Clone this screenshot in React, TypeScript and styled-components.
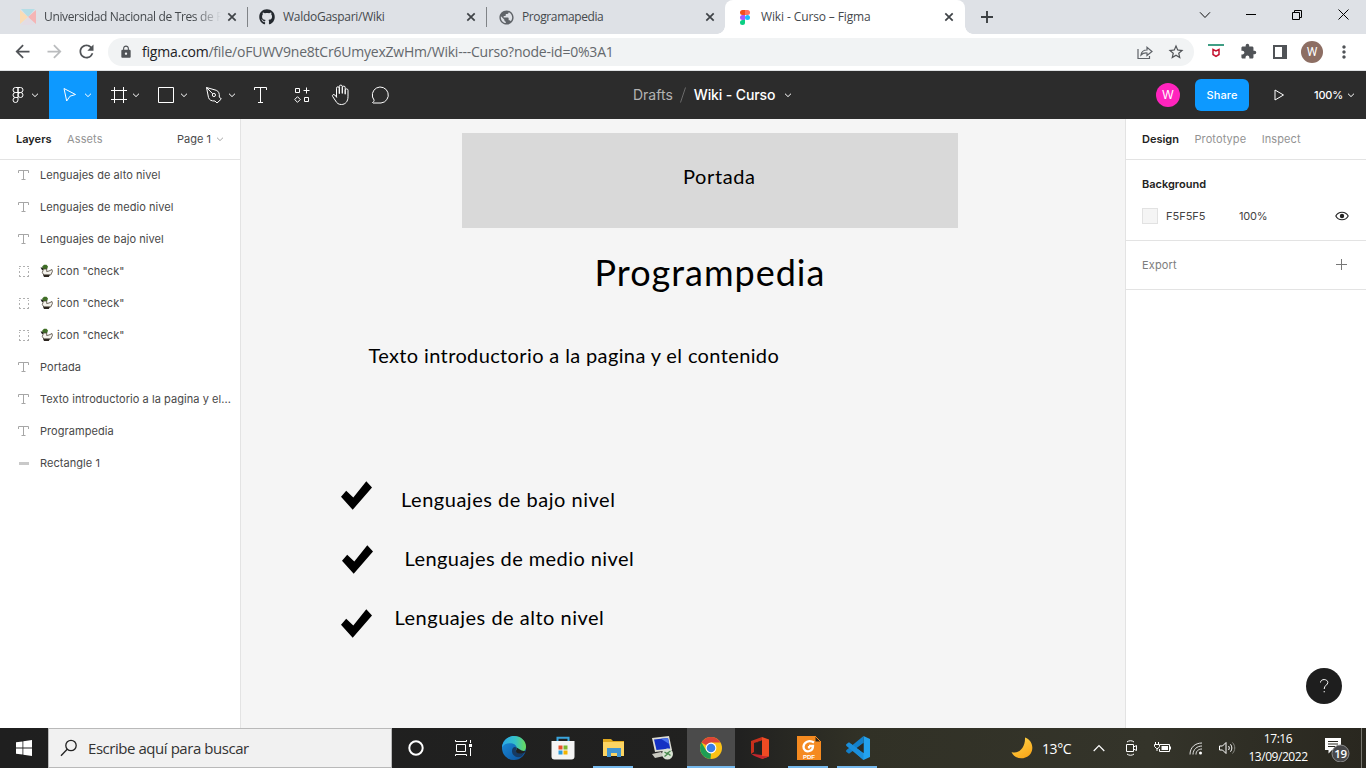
import React from "react";
import styled, { createGlobalStyle, css } from "styled-components";
import { MdArrowBack, MdArrowForward, MdRefresh, MdLock, MdStarBorder, MdExtension, MdPublic, MdMoreVert } from "react-icons/md";
import { FaGithub } from "react-icons/fa";

const Global = createGlobalStyle`
  * { box-sizing: border-box; }
  body { margin: 0; overflow: hidden; background: #fff; }
  svg { display: block; flex: none; }
`;

const Screen = styled.div`
  display: flex;
  flex-direction: column;
  width: 1366px;
  height: 768px;
  overflow: hidden;
  font-family: Inter, sans-serif;
`;

/* ---------- browser ---------- */

const TabStrip = styled.div`
  display: flex;
  height: 34px;
  padding-left: 8px;
  background: #dee1e6;
  font-family: "Open Sans", sans-serif;
`;

const Tab = styled.div<{ $active?: boolean; $divider?: boolean }>`
  position: relative;
  display: flex;
  align-items: center;
  width: 239px;
  height: 34px;
  padding: 0 10px 0 12px;
  ${(p) => p.$divider && css`
    &::after {
      content: "";
      position: absolute;
      right: -1px;
      top: 7px;
      width: 1px;
      height: 20px;
      background: #808387;
    }
  `}
  ${(p) => p.$active && css`
    width: 240px;
    padding-right: 11px;
    background: #fff;
    border-radius: 8px 8px 0 0;
    &::before, &::after {
      content: "";
      position: absolute;
      bottom: 0;
      width: 8px;
      height: 8px;
    }
    &::before { left: -8px; background: radial-gradient(circle at 0 0, transparent 7.5px, #fff 8px); }
    &::after { right: -8px; background: radial-gradient(circle at 100% 0, transparent 7.5px, #fff 8px); }
  `}
`;

const Favicon = styled.span`
  display: flex;
  justify-content: center;
  width: 16px;
  margin-right: 8px;
`;

const TabTitle = styled.span<{ $ls: number; $fade?: boolean }>`
  flex: 1;
  white-space: nowrap;
  font-size: 12px;
  line-height: 18px;
  letter-spacing: ${(p) => p.$ls}px;
  color: #45494d;
  ${(p) => p.$fade && css`
    mask-image: linear-gradient(90deg, #000 150px, transparent 177px);
  `}
`;

const NewTab = styled.div`
  display: flex;
  align-items: center;
  margin-left: 15px;
`;

const WindowButtons = styled.div`
  display: flex;
  height: 29px;
  margin-left: auto;
`;

const WindowButton = styled.div`
  display: flex;
  align-items: center;
  justify-content: center;
  width: 46px;
`;

const AddressBar = styled.div`
  display: flex;
  align-items: center;
  height: 37px;
  padding-bottom: 1px;
  border-bottom: 1px solid #dfe1e3;
  background: #fff;
`;

const NavButton = styled.div<{ $dim?: boolean }>`
  display: flex;
  align-items: center;
  justify-content: center;
  width: 32px;
  color: ${(p) => (p.$dim ? "#babcbe" : "#505357")};
`;

const NavGroup = styled.div`
  display: flex;
  padding-left: 6px;
  width: 108px;
`;

const UrlPill = styled.div`
  display: flex;
  align-items: center;
  width: 1086px;
  height: 28px;
  padding: 0 9px 0 11px;
  border-radius: 14px;
  background: #f1f3f4;
  color: #505357;
`;

const Url = styled.div`
  flex: 1;
  margin-left: 9px;
  font-family: "Open Sans", sans-serif;
  font-size: 14px;
  line-height: 20px;
  letter-spacing: -0.22px;
  color: #64686c;
  b { font-weight: 400; color: #202124; }
`;

const PillIcons = styled.div`
  display: flex;
  align-items: center;
  gap: 14px;
`;

const Extensions = styled.div`
  display: flex;
  margin-left: 6px;
`;

const ProfileDot = styled.div`
  display: flex;
  align-items: center;
  justify-content: center;
  width: 22px;
  height: 22px;
  border-radius: 50%;
  background: #8d6e63;
  color: #fff;
  font: 12px Roboto, sans-serif;
`;

/* ---------- editor toolbar ---------- */

const Toolbar = styled.div`
  display: flex;
  height: 48px;
  background: #2c2c2c;
  color: #fff;
`;

const ToolGroup = styled.div`
  display: flex;
  width: 633px;
  padding-left: 1px;
`;

const Tool = styled.div<{ $active?: boolean; $single?: boolean; $menu?: boolean }>`
  display: flex;
  align-items: center;
  justify-content: ${(p) => (p.$single ? "center" : "space-between")};
  width: ${(p) => (p.$single ? 40 : 48)}px;
  padding: ${(p) => (p.$single ? "0 1px 0 0" : p.$menu ? "0 10px 0 8px" : "0 5px 0 8px")};
  background: ${(p) => (p.$active ? "#0d99ff" : "transparent")};
`;

const Breadcrumb = styled.div`
  display: flex;
  align-items: center;
  width: 523px;
  font-size: 14px;
  line-height: 18px;
  color: #b3b3b3;
`;

const FileName = styled.span`
  margin-right: 9px;
  font-weight: 500;
  letter-spacing: -0.12px;
  color: #fff;
`;

const Slash = styled.span`
  width: 21px;
  display: flex;
  justify-content: center;
`;

const Actions = styled.div`
  display: flex;
  align-items: center;
`;

const UserDot = styled.div`
  width: 24px;
  height: 24px;
  border-radius: 50%;
  background: #ff24bd;
  font-size: 12px;
  line-height: 24px;
  text-align: center;
`;

const ShareButton = styled.div`
  width: 54px;
  height: 32px;
  margin-left: 15px;
  border-radius: 6px;
  background: #0d99ff;
  font-size: 11px;
  font-weight: 500;
  line-height: 32px;
  text-align: center;
  letter-spacing: 0.1px;
`;

const PlayIcon = styled.div`
  margin: 0 29px 0 24px;
`;

const Zoom = styled.div`
  width: 33px;
  font-size: 11px;
  font-weight: 500;
  letter-spacing: -0.15px;
`;

/* ---------- workspace ---------- */

const Workspace = styled.div`
  display: flex;
  height: 609px;
`;

const LeftPanel = styled.div`
  width: 241px;
  border-right: 1px solid #e3e3e3;
  background: #fff;
`;

const RightPanel = styled.div`
  position: relative;
  width: 241px;
  border-left: 1px solid #e3e3e3;
  background: #fff;
`;

const PanelHeader = styled.div`
  display: flex;
  align-items: center;
  gap: 15.5px;
  height: 41px;
  padding: 0 16px;
  border-bottom: 1px solid #e3e3e3;
  font-size: 11px;
`;

const PanelTab = styled.span<{ $active?: boolean }>`
  font-weight: ${(p) => (p.$active ? 600 : 400)};
  color: ${(p) => (p.$active ? "#222" : "#939393")};
  letter-spacing: ${(p) => (p.$active ? 0 : 0.1)}px;
`;

const PageName = styled.span`
  display: flex;
  align-items: center;
  gap: 5px;
  margin-left: auto;
  color: #4a4a4a;
`;

const LayerRow = styled.div`
  display: flex;
  align-items: center;
  height: 32px;
  padding: 0 0 2px 16px;
  font-size: 11px;
  color: #484848;
`;

const LayerIcon = styled.span`
  flex: none;
  width: 24px;
`;

const LayerName = styled.span`
  display: flex;
  align-items: center;
  gap: 4px;
  white-space: nowrap;
  letter-spacing: 0.06px;
`;

const Section = styled.div<{ $h: number }>`
  display: flex;
  flex-direction: column;
  justify-content: center;
  height: ${(p) => p.$h}px;
  padding: 0 16px;
  border-bottom: 1px solid #e3e3e3;
  font-size: 11px;
  color: #444;
`;

const SectionRow = styled.div`
  display: flex;
  align-items: center;
  height: 32px;
`;

const SectionTitle = styled.span<{ $muted?: boolean }>`
  flex: 1;
  font-weight: ${(p) => (p.$muted ? 400 : 600)};
  color: ${(p) => (p.$muted ? "#7d7d7d" : "#222")};
  letter-spacing: ${(p) => (p.$muted ? 0.15 : 0)}px;
`;

const Swatch = styled.span`
  width: 16px;
  height: 16px;
  margin-right: 8px;
  border: 1px solid #e2e2e2;
  background: #f5f5f5;
`;

const Hex = styled.span`
  width: 73px;
`;

const Opacity = styled.span`
  flex: 1;
  letter-spacing: -0.2px;
`;

const HelpButton = styled.div`
  position: absolute;
  right: 24px;
  bottom: 24px;
  display: flex;
  align-items: center;
  justify-content: center;
  width: 36px;
  height: 36px;
  border-radius: 50%;
  background: #1e1e1e;
`;

const Canvas = styled.div`
  position: relative;
  width: 884px;
  overflow: hidden;
  background: #f5f5f5;
`;

const Cover = styled.div`
  position: absolute;
  left: 221px;
  top: 14px;
  width: 496px;
  height: 95px;
  background: #d9d9d9;
`;

const CanvasText = styled.div<{ $x: number; $y: number; $ls: number; $size?: number }>`
  position: absolute;
  left: ${(p) => p.$x}px;
  top: ${(p) => p.$y}px;
  white-space: nowrap;
  font-family: Lato, sans-serif;
  font-size: ${(p) => p.$size ?? 20}px;
  line-height: 1.2;
  letter-spacing: ${(p) => p.$ls}px;
  color: #000;
`;

const CheckMark = styled.svg<{ $x: number; $y: number }>`
  position: absolute;
  left: ${(p) => p.$x}px;
  top: ${(p) => p.$y}px;
`;

/* ---------- taskbar ---------- */

const Taskbar = styled.div`
  display: flex;
  height: 40px;
  background: linear-gradient(90deg, #1f1f1f 0, #212120 740px, #313126 860px, #34342a 1150px, #29271f 1366px);
  font-family: "Open Sans", sans-serif;
  color: #fff;
`;

const StartButton = styled.div`
  display: flex;
  align-items: center;
  justify-content: center;
  width: 48px;
`;

const SearchBox = styled.div`
  display: flex;
  align-items: center;
  width: 344px;
  padding-left: 11px;
  border: 1px solid #b9b9b9;
  background: #f1f1f1;
  font-size: 15px;
  letter-spacing: -0.45px;
  color: #333;
  svg { margin-right: 10px; }
`;

const TaskButton = styled.div<{ $active?: boolean; $open?: boolean; $w?: number; $trim?: number }>`
  display: flex;
  align-items: center;
  justify-content: center;
  width: ${(p) => p.$w ?? 49}px;
  padding-right: ${(p) => p.$trim ?? 0}px;
  position: relative;
  background: ${(p) => (p.$active ? "#4b4b4b" : "transparent")};
  ${(p) => p.$open && css`
    &::after {
      content: "";
      position: absolute;
      bottom: 0;
      left: ${p.$active ? 0 : 4}px;
      right: ${p.$active ? 0 : 5}px;
      height: 2px;
      background: #76b9ed;
    }
  `}
`;

const Tray = styled.div`
  display: flex;
  align-items: center;
  margin-left: auto;
`;

const TrayCell = styled.div<{ $w: number }>`
  display: flex;
  justify-content: center;
  width: ${(p) => p.$w}px;
`;

const Weather = styled.div`
  width: 40px;
  margin-left: 9px;
  font-size: 14px;
  letter-spacing: -0.4px;
`;

const Clock = styled.div`
  width: 73px;
  padding-left: 1px;
  font-size: 12px;
  line-height: 18px;
  text-align: center;
  letter-spacing: -0.45px;
`;

const DesktopEdge = styled.div`
  height: 40px;
  border-left: 1px solid #77766f;
  width: 5px;
`;

/* ---------- icons ---------- */

const Chevron = ({ color = "#fff" }: { color?: string }) => (
  <svg width="8" height="8" viewBox="0 0 8 8" fill="none" stroke={color}>
    <path d="M1 2.7 4 5.6 7 2.7" />
  </svg>
);

const CloseX = () => (
  <svg width="10" height="10" viewBox="0 0 10 10" stroke="#3f4347" strokeWidth="1.7">
    <path d="M1.3 1.3 8.7 8.7M8.7 1.3 1.3 8.7" />
  </svg>
);

const FigmaColor = () => (
  <svg width="10" height="15" viewBox="0 0 10 15">
    <path d="M2.5 0H5v5H2.5a2.5 2.5 0 0 1 0-5z" fill="#f24e1e" />
    <path d="M5 0h2.5a2.5 2.5 0 0 1 0 5H5z" fill="#ff7262" />
    <path d="M2.5 5H5v5H2.5a2.5 2.5 0 0 1 0-5z" fill="#a259ff" />
    <circle cx="7.5" cy="7.5" r="2.5" fill="#1abcfe" />
    <path d="M2.5 10H5v2.5A2.5 2.5 0 1 1 2.5 10z" fill="#0acf83" />
  </svg>
);

const UniIcon = () => (
  <svg width="16" height="16" viewBox="0 0 16 16">
    <path d="M1 0h14L8 8z" fill="#b4dde6" />
    <path d="M0 1v14l8-7z" fill="#fbdcb4" />
    <path d="M16 1v14L8 8z" fill="#f5b5b5" />
    <path d="M1 16h14L8 8z" fill="#e3dce4" />
  </svg>
);

const TextLayerIcon = () => (
  <svg width="14" height="14" viewBox="0 0 14 14" fill="none" stroke="#a6a6a6">
    <path d="M2.5 5V2.5h10V5M7.5 2.5v9M5.5 11.5h4" />
  </svg>
);

const GroupLayerIcon = () => (
  <svg width="14" height="14" viewBox="0 0 14 14" fill="none" stroke="#b0b0b0">
    <path d="M3 2.5h2M7 2.5h2M11 2.5h2M3 12.5h2M7 12.5h2M11 12.5h2M3.5 4v1M3.5 7v2M3.5 11v1M12.5 4v1M12.5 7v2M12.5 11v1" />
  </svg>
);

const RectLayerIcon = () => (
  <svg width="14" height="14" viewBox="0 0 14 14">
    <path d="M3 6h10v3H3z" fill="#c9c9c9" />
  </svg>
);

const Duck = () => (
  <svg width="13" height="14" viewBox="0 0 13 14">
    <path d="M.5 3.5H3V6H2z" fill="#222" />
    <path d="M2.2 2.5 4 .8h2.5L8 2.5 7.2 5H3z" fill="#3f6e26" />
    <path d="M3.5 5h3.200v2.500L9 7l3-1.500.4 2-1.700 3.500H3.800L2.300 8.500z" fill="#f4f2ec" stroke="#4a4136" strokeWidth=".8" />
    <path d="M3 10.800h7l-1.200 2.200H4z" fill="#2c2620" />
  </svg>
);

const layers: { kind: "text" | "group" | "rect"; name: string }[] = [
  { kind: "text", name: "Lenguajes de alto nivel" },
  { kind: "text", name: "Lenguajes de medio nivel" },
  { kind: "text", name: "Lenguajes de bajo nivel" },
  { kind: "group", name: 'icon "check"' },
  { kind: "group", name: 'icon "check"' },
  { kind: "group", name: 'icon "check"' },
  { kind: "text", name: "Portada" },
  { kind: "text", name: "Texto introductorio a la pagina y el..." },
  { kind: "text", name: "Programpedia" },
  { kind: "rect", name: "Rectangle 1" },
];

const Check = ({ x, y }: { x: number; y: number }) => (
  <CheckMark $x={x} $y={y} width="32" height="30" viewBox="0 0 32 30">
    <path d="M0 15.700 5.200 9.800l7.100 6.700L25.300.2l5.700 6.200L11.700 28.700z" />
  </CheckMark>
);

const Browser = () => (
  <>
    <TabStrip>
      <Tab $divider>
        <Favicon><UniIcon /></Favicon>
        <TabTitle $ls={-0.35} $fade>Universidad Nacional de Tres de F</TabTitle>
        <CloseX />
      </Tab>
      <Tab $divider>
        <Favicon><FaGithub size={16} color="#24292f" /></Favicon>
        <TabTitle $ls={-0.28}>WaldoGaspari/Wiki</TabTitle>
        <CloseX />
      </Tab>
      <Tab>
        <Favicon><MdPublic size={17} color="#5f6368" /></Favicon>
        <TabTitle $ls={-0.38}>Programapedia</TabTitle>
        <CloseX />
      </Tab>
      <Tab $active>
        <Favicon><FigmaColor /></Favicon>
        <TabTitle $ls={-0.12}>Wiki - Curso – Figma</TabTitle>
        <CloseX />
      </Tab>
      <NewTab>
        <svg width="14" height="14" viewBox="0 0 14 14" stroke="#3c4043" strokeWidth="1.9">
          <path d="M7 1v12M1 7h12" />
        </svg>
      </NewTab>
      <WindowButtons>
        <WindowButton>
          <svg width="12" height="8" viewBox="0 0 12 8" fill="none" stroke="#111"><path d="M1 1.3 6 6.5 11 1.3" /></svg>
        </WindowButton>
        <WindowButton>
          <svg width="10" height="1" viewBox="0 0 10 1"><path d="M0 0h10v1H0z" /></svg>
        </WindowButton>
        <WindowButton>
          <svg width="10" height="10" viewBox="0 0 10 10" fill="none" stroke="#000">
            <path d="M.5 2.5h7v7h-7zM2.5 2.5v-2h7v7h-2" />
          </svg>
        </WindowButton>
        <WindowButton>
          <svg width="11" height="11" viewBox="0 0 11 11" stroke="#000"><path d="M.5.5l10 10M10.5.5l-10 10" /></svg>
        </WindowButton>
      </WindowButtons>
    </TabStrip>
    <AddressBar>
      <NavGroup>
        <NavButton><MdArrowBack size={21} /></NavButton>
        <NavButton $dim><MdArrowForward size={21} /></NavButton>
        <NavButton><MdRefresh size={21} /></NavButton>
      </NavGroup>
      <UrlPill>
        <MdLock size={14} />
        <Url><b>figma.com</b>/file/oFUWV9ne8tCr6UmyexZwHm/Wiki---Curso?node-id=0%3A1</Url>
        <PillIcons>
          <svg width="16" height="16" viewBox="0 0 16 16" fill="none" stroke="#5f6368" strokeWidth="1.2">
            <path d="M1 5v9.5h11.500V12" />
            <path d="M4 11c.5-3.500 2.500-5 6-5V3.200L15 7.500l-5 4V9c-2.500-.2-4.500.4-6 2z" />
          </svg>
          <MdStarBorder size={18} />
        </PillIcons>
      </UrlPill>
      <Extensions>
        <NavButton>
          <svg width="16" height="16" viewBox="0 0 16 16" fill="none">
            <path d="M0 1h16" stroke="#3f9e84" strokeWidth="2" />
            <path d="M5 5.500l3 1.500 3-1.500v5L8 12.300 5 10.500z" stroke="#c4122f" strokeWidth="1.5" />
          </svg>
        </NavButton>
        <NavButton><MdExtension size={17} /></NavButton>
        <NavButton>
          <svg width="14" height="14" viewBox="0 0 14 14">
            <path d="M0 0h14v14H0zM2 2v10h7V2z" fill="#505357" fillRule="evenodd" />
          </svg>
        </NavButton>
        <NavButton><ProfileDot>W</ProfileDot></NavButton>
        <NavButton><MdMoreVert size={20} /></NavButton>
      </Extensions>
    </AddressBar>
  </>
);

const EditorToolbar = () => (
  <Toolbar>
    <ToolGroup>
      <Tool $menu>
        <svg width="18" height="18" viewBox="0 0 18 18" fill="none" stroke="#fff">
          <path d="M9 1.500H6.500a2.500 2.500 0 0 0 0 5H9zM9 1.500h2.500a2.500 2.500 0 0 1 0 5H9zM9 6.500H6.500a2.500 2.500 0 0 0 0 5H9zM6.500 11.500H9V14a2.500 2.500 0 1 1-2.500-2.500z" />
          <circle cx="11.500" cy="9" r="2.500" />
        </svg>
        <Chevron />
      </Tool>
      <Tool $active>
        <svg width="24" height="18" viewBox="0 0 24 18" fill="none" stroke="#fff" strokeLinejoin="round">
          <path d="M7 2.500 18.500 8.500 13 10.200 9.700 15z" />
        </svg>
        <Chevron />
      </Tool>
      <Tool>
        <svg width="26" height="18" viewBox="0 0 26 18" fill="none" stroke="#fff">
          <path d="M9.500 1v16M18.500 1v16M6 4.500h16M6 13.500h16" />
        </svg>
        <Chevron />
      </Tool>
      <Tool>
        <svg width="26" height="18" viewBox="0 0 26 18" fill="none" stroke="#fff">
          <path d="M5.500 1.500h15v15h-15z" />
        </svg>
        <Chevron />
      </Tool>
      <Tool>
        <svg width="24" height="18" viewBox="0 0 24 18" fill="none" stroke="#fff" strokeLinejoin="round">
          <path d="M5.500 1.500 15.300 4.300C17.600 5.200 18.700 7.500 18.300 11l2 2-4.300 4-2-2C10.300 15.200 8.300 14 7.500 11.500z" />
          <path d="M5.500 1.500l6.200 6.300" />
          <circle cx="12.900" cy="9" r="1.600" />
        </svg>
        <Chevron />
      </Tool>
      <Tool $single>
        <svg width="15" height="18" viewBox="0 0 15 18" fill="none" stroke="#fff">
          <path d="M1.500 4V1.500h12V4M7.500 1.500v15M5 16.500h5" />
        </svg>
      </Tool>
      <Tool $single>
        <svg width="19" height="18" viewBox="-2 0 19 18" fill="none" stroke="#fff">
          <path d="M2.500 2.500h4v4h-4zM11.500 11.500h4v4h-4zM13.500 1.500v6M10.500 4.500h6M4.500 10.700 7.300 13.500 4.500 16.300 1.700 13.500z" />
        </svg>
      </Tool>
      <Tool $single>
        <svg width="20" height="22" viewBox="0 0 20 22" fill="none" stroke="#fff" strokeLinejoin="round" strokeLinecap="round">
          <path d="M5.500 13V4.200a1.400 1.400 0 0 1 2.800 0V9.500M8.300 9V2.600a1.500 1.500 0 0 1 3 0V9M11.300 9V3.600a1.400 1.400 0 0 1 2.900 0V10M14.200 9.500V6.300a1.400 1.400 0 0 1 2.800 0v6.500c0 4.500-2.500 7.700-6.600 7.700-3 0-4.400-1.300-5.700-3.500L1.600 12.400c-.8-1.500 1.100-2.600 2.200-1.400L5.500 13" />
        </svg>
      </Tool>
      <Tool $single>
        <svg width="20" height="20" viewBox="0 0 20 20" fill="none" stroke="#fff" strokeLinejoin="round">
          <path d="M1.500 17.500c1-.5 1.600-1.400 1.600-2.400A8 8 0 1 1 10 18H2z" />
        </svg>
      </Tool>
    </ToolGroup>
    <Breadcrumb>
      Drafts
      <Slash>
        <svg width="6" height="16" viewBox="0 0 6 16" stroke="#6b6b6b"><path d="M.5 15.500 5.500.5" /></svg>
      </Slash>
      <FileName>Wiki - Curso</FileName>
      <Chevron />
    </Breadcrumb>
    <Actions>
      <UserDot>W</UserDot>
      <ShareButton>Share</ShareButton>
      <PlayIcon>
        <svg width="12" height="12" viewBox="0 0 12 12" fill="none" stroke="#fff" strokeLinejoin="round"><path d="M2 1v10l8.500-5z" /></svg>
      </PlayIcon>
      <Zoom>100%</Zoom>
      <Chevron />
    </Actions>
  </Toolbar>
);

const TaskIcons = () => (
  <>
    <TaskButton $trim={2}>
      <svg width="18" height="18" viewBox="0 0 18 18" fill="none" stroke="#fff" strokeWidth="2"><circle cx="9" cy="9" r="6.700" /></svg>
    </TaskButton>
    <TaskButton $w={50} $trim={6}>
      <svg width="18" height="18" viewBox="0 0 18 18" fill="none" stroke="#fff">
        <path d="M2.500 5.500h9v7h-9zM1.500 1v1.500h11V1M1.500 17v-1.500h11V17M16.500 1v3M16.500 9v8" />
        <path d="M15 5h3v3h-3z" fill="#fff" stroke="none" />
      </svg>
    </TaskButton>
    <TaskButton $trim={3}>
      <svg width="26" height="26" viewBox="0 0 26 26">
        <defs>
          <linearGradient id="edgeTop" x1="0" x2="1"><stop offset="0" stopColor="#2aa7e8" /><stop offset=".55" stopColor="#35c1c8" /><stop offset="1" stopColor="#6bdc58" /></linearGradient>
          <linearGradient id="edgeBody" x1="0" x2="1" y2="1"><stop offset="0" stopColor="#1b8fdc" /><stop offset="1" stopColor="#0c4f9c" /></linearGradient>
        </defs>
        <circle cx="13" cy="13" r="12" fill="url(#edgeBody)" />
        <path d="M1 12.500C1.500 5.500 7 1 13 1c7 0 12 5 12 10.500 0 4-3 6-6.500 6-2.500 0-4-1-3.500-2 1.500-2 .8-6-3.500-7C7 7.500 2.500 9 1 12.500z" fill="url(#edgeTop)" />
        <path d="M14.800 15.500c-.5 1.200 1.200 2 3.700 2 2.400 0 4.500-.7 5.500-1.800-.6 2.300-2 4.500-4 6-5 1.600-9-1.500-9-5.700 0-2.500 1.500-4 3-4 1.800.4 1.500 2.600.8 3.500z" fill="#173a63" />
        <path d="M15 15.500c1-1.500.8-3-.3-3.600l6 3.600 4.300 1c-2 1.500-4 2-6 2-3 0-4.600-1.500-4-3z" fill="#202020" />
      </svg>
    </TaskButton>
    <TaskButton $trim={3}>
      <svg width="24" height="26" viewBox="0 0 24 26">
        <path d="M6.500 7V2.800h11V7" fill="none" stroke="#3aa5dd" strokeWidth="2" />
        <path d="M.5 6h23v15.500a3 3 0 0 1-3 3h-17a3 3 0 0 1-3-3z" fill="#f4f4f4" />
        <path d="M7.500 10.500h4v4h-4z" fill="#e8502c" /><path d="M12.500 10.500h4v4h-4z" fill="#7cb82f" />
        <path d="M7.500 15.500h4v4h-4z" fill="#2a9ddc" /><path d="M12.500 15.500h4v4h-4z" fill="#f4b400" />
      </svg>
    </TaskButton>
    <TaskButton $open>
      <svg width="24" height="22" viewBox="0 0 24 22">
        <path d="M1 2h8l2 2h11v5H1z" fill="#e0a81f" />
        <path d="M1 5h21v14H1z" fill="#fcd462" />
        <path d="M5 11h14v9h-4v-4H9v4H5z" fill="#4295d1" />
      </svg>
    </TaskButton>
    <TaskButton $trim={2}>
      <svg width="26" height="26" viewBox="0 0 26 26">
        <path d="M3 3 20 1l3 14-17 2z" fill="#dcdcd4" />
        <path d="M5 4.500 19 3l2.200 10.500L7.500 15z" fill="#1431c4" />
        <path d="M12 3.800 19 3l1.200 6z" fill="#4a73ee" />
        <path d="M3 19l9-2 3 4-9 2z" fill="#c9c9c0" />
        <circle cx="18.500" cy="19" r="5.500" fill="#d9e3d4" />
        <path d="M15.500 17l3 2-3 2.500M21.500 16l-3 2 3 2.500" fill="none" stroke="#44884a" strokeWidth="1.3" />
      </svg>
    </TaskButton>
    <TaskButton $active $open $w={48}>
      <svg width="24" height="24" viewBox="0 0 24 24">
        <circle cx="12" cy="12" r="11" fill="#fbc116" />
        <path d="M12 12 2.500 6.500A11 11 0 0 1 21.500 6.500H12z" fill="#dc4437" />
        <path d="M2.500 6.500 7.300 14.700 12 17.500 11.500 23A11 11 0 0 1 2.500 6.500z" fill="#1e9e55" />
        <circle cx="12" cy="12" r="5.400" fill="#fff" />
        <circle cx="12" cy="12" r="4.300" fill="#3a7de8" />
      </svg>
    </TaskButton>
    <TaskButton>
      <svg width="20" height="24" viewBox="0 0 20 24">
        <path d="M12 1 1 5v13l3-2V7l8-2.500z" fill="#c8301c" />
        <path d="M12 1l7 2.500v17L12 23z" fill="#ef4b23" />
        <path d="M12 1v4l-5 1.500v11l-5.500.8L1 18l3.500 2 7.500 3 7-2.500L12 20z" fill="#c3262d" />
        <path d="M7 6.500l5-2V19l-8-1 3-1z" fill="#22211f" />
      </svg>
    </TaskButton>
    <TaskButton $open>
      <svg width="24" height="24" viewBox="0 0 24 24">
        <path d="M0 0h18l6 6v18H0z" fill="#f58a20" />
        <path d="M18 0v6h6z" fill="#32281a" stroke="#f58a20" />
        <path d="M17 6.500c-5-3-10-.5-10.500 4-.3 3.500 3 5.500 6 4.500 2.500-.8 3.500-3 3.500-5h-4M12 10v2.500" fill="none" stroke="#fff" strokeWidth="2.300" />
        <text x="12" y="22.700" fontFamily="Liberation Sans, sans-serif" fontWeight="700" fontSize="6" fill="#fff" textAnchor="middle">PDF</text>
      </svg>
    </TaskButton>
    <TaskButton $open>
      <svg width="24" height="24" viewBox="0 0 24 24">
        <path d="M17.500 0 24 3v18l-6.500 3L3 11l2-3 12.500 9z" fill="#23a2ee" />
        <path d="M17.500 0v7L3 17.700.2 15.800v-1.500z" fill="#1380ca" />
        <path d="M.2 8.200 3 6.300 17.500 17v7L.2 9.700z" fill="#1b8fdb" />
        <path d="M17.500 7v10L11 12z" fill="#2b2b24" />
      </svg>
    </TaskButton>
  </>
);

export default function App() {
  return (
    <Screen>
      <Global />
      <Browser />
      <EditorToolbar />
      <Workspace>
        <LeftPanel>
          <PanelHeader>
            <PanelTab $active>Layers</PanelTab>
            <PanelTab>Assets</PanelTab>
            <PageName>Page 1 <Chevron color="#a8a8a8" /></PageName>
          </PanelHeader>
          {layers.map((l, i) => (
            <LayerRow key={i}>
              <LayerIcon>
                {l.kind === "text" ? <TextLayerIcon /> : l.kind === "group" ? <GroupLayerIcon /> : <RectLayerIcon />}
              </LayerIcon>
              <LayerName>{l.kind === "group" && <Duck />}{l.name}</LayerName>
            </LayerRow>
          ))}
        </LeftPanel>
        <Canvas>
          <Cover />
          <CanvasText $x={442} $y={45} $ls={0.6}>Portada</CanvasText>
          <CanvasText $x={353.5} $y={132} $ls={1} $size={36}>Programpedia</CanvasText>
          <CanvasText $x={127.5} $y={224} $ls={0.37}>Texto introductorio a la pagina y el contenido</CanvasText>
          <Check x={100} y={362} />
          <Check x={100.5} y={426} />
          <Check x={100} y={490} />
          <CanvasText $x={160} $y={368} $ls={0.52}>Lenguajes de bajo nivel</CanvasText>
          <CanvasText $x={163.5} $y={427} $ls={0.42}>Lenguajes de medio nivel</CanvasText>
          <CanvasText $x={153.5} $y={486} $ls={0.5}>Lenguajes de alto nivel</CanvasText>
        </Canvas>
        <RightPanel>
          <PanelHeader>
            <PanelTab $active>Design</PanelTab>
            <PanelTab>Prototype</PanelTab>
            <PanelTab>Inspect</PanelTab>
          </PanelHeader>
          <Section $h={81}>
            <SectionRow><SectionTitle>Background</SectionTitle></SectionRow>
            <SectionRow>
              <Swatch />
              <Hex>F5F5F5</Hex>
              <Opacity>100%</Opacity>
              <svg width="16" height="12" viewBox="0 0 16 12" fill="none" stroke="#222" strokeWidth="1.100">
                <path d="M1.800 6c1.300-2.500 3.600-3.800 6.200-3.800S12.900 3.500 14.200 6c-1.300 2.500-3.600 3.800-6.200 3.800S3.100 8.500 1.800 6z" />
                <circle cx="8" cy="6" r="2.200" fill="#222" stroke="none" />
              </svg>
            </SectionRow>
          </Section>
          <Section $h={49}>
            <SectionRow>
              <SectionTitle $muted>Export</SectionTitle>
              <svg width="15" height="14" viewBox="0 0 15 14" stroke="#777"><path d="M6.500 1v11M1 6.500h11" /></svg>
            </SectionRow>
          </Section>
          <HelpButton>
            <svg width="12" height="18" viewBox="0 0 12 18" fill="none" stroke="#fff">
              <path d="M2.500 5.500C2.500 1.500 9.800 1.700 9.800 5.500 9.800 8 6.200 8.300 6.200 12M6.200 14v1.300" />
            </svg>
          </HelpButton>
        </RightPanel>
      </Workspace>
      <Taskbar>
        <StartButton>
          <svg width="16" height="16" viewBox="0 0 16 16" fill="#fff">
            <path d="M0 2.300 6.500 1.400V7.600H0zM7.300 1.300 16 0v7.600H7.300zM0 8.400h6.500v6.200L0 13.700zM7.300 8.400H16V16l-8.700-1.300z" />
          </svg>
        </StartButton>
        <SearchBox>
          <svg width="18" height="18" viewBox="0 0 18 18" fill="none" stroke="#222" strokeWidth="1.300">
            <circle cx="11" cy="6.500" r="5.200" /><path d="M7.200 10.200 1 16.700" />
          </svg>
          Escribe aquí para buscar
        </SearchBox>
        <TaskIcons />
        <Tray>
          <svg width="22" height="22" viewBox="0 0 22 22">
            <defs><linearGradient id="moon" x1="0" x2=".6" y1="0" y2="1"><stop offset="0" stopColor="#ffd94f" /><stop offset="1" stopColor="#f9a81b" /></linearGradient></defs>
            <path d="M14 .5C23 4 23 14 18 18.500 12 23.500 3 21.500 .5 15c7 2.500 14-4 13.500-14.500z" fill="url(#moon)" />
          </svg>
          <Weather>13°C</Weather>
          <TrayCell $w={34}>
            <svg width="12" height="8" viewBox="0 0 12 8" fill="none" stroke="#fff" strokeWidth="1.200"><path d="M.7 7 6 1.500 11.300 7" /></svg>
          </TrayCell>
          <TrayCell $w={30}>
            <svg width="14" height="18" viewBox="0 0 14 18" fill="none" stroke="#fff">
              <path d="M2.500 5.500h7v7h-7zM9.500 8l3-1.500v5l-3-1.500M3 3c2-1.700 5-1.700 7 0M3 15c2 1.700 5 1.700 7 0" />
            </svg>
          </TrayCell>
          <TrayCell $w={33}>
            <svg width="18" height="14" viewBox="0 0 18 14" fill="none" stroke="#fff">
              <path d="M6 3.500h9.500v7h-10V8M16.500 5.500v3M1.500 1v2.500M4.500 1v2.500M.5 3.500h5V5.500L4 7.500H2.500L.5 5.500zM3 7.500V10" />
              <path d="M7.500 5h6.500v4H7.500z" fill="#fff" stroke="none" />
            </svg>
          </TrayCell>
          <TrayCell $w={34}>
            <svg width="14" height="14" viewBox="0 0 14 14" fill="none" stroke="#e5e5e5">
              <path d="M1 13.500C1 6.500 6 2 13 2M4 13.500c0-5 4-8.500 9-8.500M7 13.500C7 10 9.500 8 13 8" />
              <circle cx="11.500" cy="12" r="1.500" fill="#fff" stroke="none" />
            </svg>
          </TrayCell>
          <TrayCell $w={28}>
            <svg width="17" height="14" viewBox="0 0 17 14" fill="none" stroke="#fff">
              <path d="M.5 5h3l3.500-3.500v11L3.500 9h-3zM9.500 5c1 1.300 1 2.700 0 4M11.500 3.300c1.800 2.300 1.800 5.100 0 7.400" />
              <path d="M13.500 1.500c3 3.500 3 7.500 0 11" stroke="#8a8a84" />
            </svg>
          </TrayCell>
          <Clock>17:16<br />13/09/2022</Clock>
          <TrayCell $w={47}>
            <svg width="28" height="28" viewBox="0 0 28 28">
              <path d="M1 4h16v12H8l-3.500 3.500V16H1z" fill="#fff" />
              <path d="M4 7.500h10M4 10h10M4 12.500h7" stroke="#2b2a22" />
              <circle cx="16.500" cy="19.500" r="8.500" fill="#48484a" stroke="#8d8d8d" />
              <text x="16.500" y="23.500" fontFamily="Open Sans, sans-serif" fontSize="11.500" fontWeight="600" fill="#fff" textAnchor="middle" letterSpacing="-.4">19</text>
            </svg>
          </TrayCell>
          <DesktopEdge />
        </Tray>
      </Taskbar>
    </Screen>
  );
}
